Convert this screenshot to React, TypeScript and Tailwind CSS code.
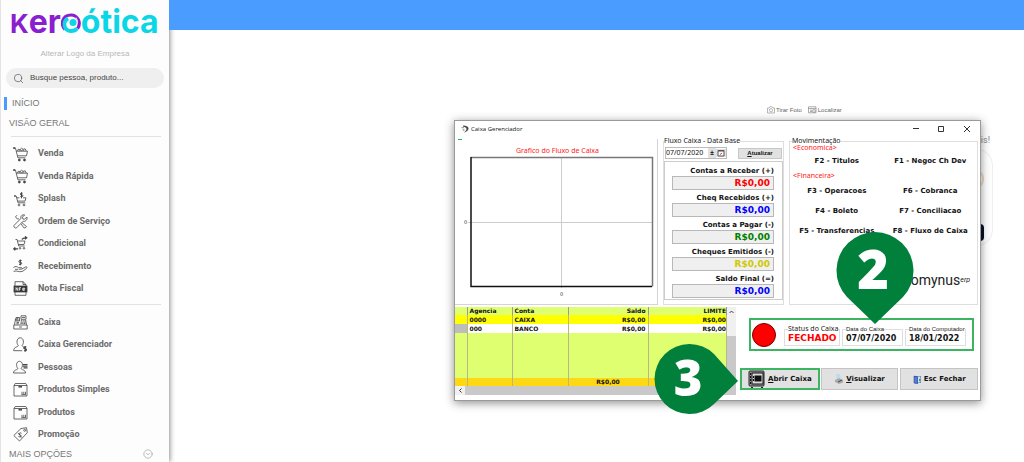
import type { ReactNode } from "react";
import { CircleChevronDown, Search } from "lucide-react";

type Item = { label: string; icon: ReactNode };

const cart = (
  <>
    <path d="M.5 1.200h2l2.400 9.600h7.600M3.300 4.200h11.200l-1 4.600H4.500" />
    <path d="M4.500 4l.8-1.800 1.700.5 1.600-1.500 1.500 1.200 2-.6 1.200 2.200M6 3.800l1-1 1.500.8 1.500-.8 1.200.9" />
    <path d="M.3 1h1.900" strokeWidth="1.600" />
    <circle cx="6.300" cy="13" r="1" fill="#444" />
    <circle cx="11.500" cy="13" r="1" fill="#444" />
  </>
);

const box = (
  <>
    <path d="M1 3.500h13V14H1zM1 3.500l1.200-2h10.600l1.200 2" />
    <path d="M5.500 4.800h3.500" strokeWidth="1.500" />
    <path d="M9 9.800v2.600M10.800 9.800v2.600M12.500 9.800v2.600M8.500 12.600h4.500" />
  </>
);

const SALES: Item[] = [
  { label: "Venda", icon: cart },
  { label: "Venda Rápida", icon: cart },
  {
    label: "Splash",
    icon: (
      <>
        <path d="M1.500 4h1.700l1.800 6.800h7.300M3.600 5.800h2.900M10 5.800h3l-1 3.300H4.600" />
        <path d="M9.600 1.200H8.200a.8.800 0 0 0 0 1.700h.8a.8.800 0 0 1 0 1.700H7.400M8.500.3v6" strokeWidth="1" />
        <path d="M1.200 4h1.400" strokeWidth="1.400" />
        <circle cx="6" cy="13" r=".9" />
        <circle cx="11" cy="13" r=".9" />
      </>
    ),
  },
  {
    label: "Ordem de Serviço",
    icon: (
      <>
        <path d="M13.800 3l-2.300 2.300-1.700-.4-.4-1.700L11.700.9C9.400.2 7.200 2 7.800 4.600L1.300 11.100c-1.300 1.500.9 3.800 2.500 2.500l6.400-6.400c2.500.7 4.500-1.700 3.600-4.200z" />
        <path d="M8.900 8.600l4.600 4-1.500 1.400-1.300-.3-2.500-3.800M6 4.800L4.300 5 2.500 2.900 4 1.200" />
      </>
    ),
  },
  {
    label: "Condicional",
    icon: (
      <>
        <path d="M2.500 3.500h1.600l1.600 6.500h6M4.500 5h7.500l-1 3.500H5.300" />
        <path d="M9 3.500c.5-1.500 2-1.700 4.500-1.700M12 .4l1.700 1.400L12 3.300M5 12.800H.9M2.300 11.400L.8 12.800l1.500 1.500" strokeWidth="1.300" />
        <circle cx="7" cy="12.300" r=".8" />
        <circle cx="11" cy="12.300" r=".8" />
      </>
    ),
  },
  {
    label: "Recebimento",
    icon: (
      <>
        <path d="M8.600 1.500H6.900a.9.900 0 0 0 0 1.900h.8a.9.900 0 0 1 0 1.900H6M7.300.5v5.900" strokeWidth="1" />
        <path d="M.5 8.500c2-1.500 3.500-1.200 5 .2h3c1 .1.900 1.400 0 1.500H5.800M9.300 9.800l3.500-1.900c1.200-.3 1.700.7.700 1.500l-3.700 2.800c-2.500 1-4.500.2-6.500-.2L.5 12.300" />
        <path d="M2 10.300h3" />
      </>
    ),
  },
  {
    label: "Nota Fiscal",
    icon: (
      <>
        <path d="M2 5V.7h8l3 2.800V5M2 11v3.300h11V11M10 .7v2.800h3" />
        <rect x="1" y="5" width="13" height="6" fill="#333" />
        <path d="M3 9.600V6.500l1.800 3V6.500M6.400 9.600V6.600h1.500M6.400 8h1.200M11.700 9.300h-1.900V7.200h1.900v1h-1.900" stroke="#fff" strokeWidth=".8" />
      </>
    ),
  },
];

const MANAGEMENT: Item[] = [
  {
    label: "Caixa",
    icon: (
      <>
        <path d="M.8 10h13.400v4H.8zM1.500 10l1-6h2M13.500 10l-.8-5M6 12h3" />
        <path d="M3 2.500h3.500V6H3zM8 .8h5v3.500H8zM9 2.500h3" />
        <path d="M7.800 5.800h4.500M7.600 7.200h5M7.500 8.600h5.400" strokeWidth="1" strokeDasharray="1.200 .6" />
        <path d="M3.500 7.500h2.500M3.300 8.800h2.500M4.800 2.500V6" />
      </>
    ),
  },
  {
    label: "Caixa Gerenciador",
    icon: (
      <>
        <path d="M5.300 8.300C3.300 6.800 3.300.8 7.200.8s3.900 6 1.900 7.500c0 1 .8 1.200 1.500 1.600M5.300 8.300c0 1.900-4.600 1.100-4.600 5.400h8.500" />
        <path d="M13.300 9.900h-1.600a.9.900 0 0 0 0 1.900h.8a.9.900 0 0 1 0 1.900H11M12.200 9v5.800" strokeWidth="1.100" />
      </>
    ),
  },
  {
    label: "Pessoas",
    icon: (
      <>
        <path d="M4.900 8.300C2.900 6.800 2.900 1.300 6.500 1.300s3.600 5.500 1.600 7c0 1.900 4.400 1.100 4.400 4.700H.5c0-3.600 4.400-2.800 4.400-4.700z" />
        <path d="M9.800 4.500h4.700M9.800 6.200h4.700M10.500 7.900h4" strokeWidth="1.200" />
      </>
    ),
  },
  { label: "Produtos Simples", icon: box },
  { label: "Produtos", icon: box },
  {
    label: "Promoção",
    icon: (
      <>
        <path d="M8 1.500l5.500-.8.800 5L6.500 14 .8 8.500z" />
        <circle cx="11.700" cy="3.300" r="1" />
        <path d="M8.500 6.300L6.800 5.800l-1 1.300 2.500 1.600-.9 1.400-2-.6M5.300 6l3.200 4.500" />
      </>
    ),
  },
];

const TOTALS = [
  { label: "Contas a Receber (+)", color: "text-[#ff0000]" },
  { label: "Cheq Recebidos (+)", color: "text-[#0000ff]" },
  { label: "Contas a Pagar (-)", color: "text-[#008000]" },
  { label: "Cheques Emitidos (-)", color: "text-[#d0c800]" },
  { label: "Saldo Final (=)", color: "text-[#0000ff]" },
];

function Menu({ items, className }: { items: Item[]; className: string }) {
  return (
    <ul className={`grid auto-rows-fr ${className}`}>
      {items.map((item) => (
        <li key={item.label} className="flex">
          <a href="#" className="flex items-center gap-[10px] pl-3 font-['Roboto'] text-[9px] font-bold text-[#6b6b6b]">
            <svg viewBox="0 0 15 15" className="size-[15px]" fill="none" stroke="#444" strokeWidth=".8">
              {item.icon}
            </svg>
            {item.label}
          </a>
        </li>
      ))}
    </ul>
  );
}

function Logo() {
  return (
    <a href="#" aria-label="Keroótica" className="flex h-[46px] items-baseline pl-[9px] pt-[2px] font-['Inter'] text-[32px] font-bold leading-10 text-[#8a1fd0]">
      <span className="text-[26px]">K</span>
      <span>er</span>
      <svg viewBox="0 0 20 20" className="size-[20px] shrink-0">
        <path d="M4 16.500C-1 11 1.500 2 10 2c7 0 10.500 8 6.500 13.500" fill="none" stroke="#8a1fd0" strokeWidth="3.200" />
        <path d="M7 5.500C1 9 3 18 10 18c3 0 5-1.200 6-2.500" fill="none" stroke="#0ad6e6" strokeWidth="3.800" />
        <path d="M15 4.500c2 3 1.500 6.500-1 9" fill="none" stroke="#fff" />
        <circle cx="12" cy="9.500" r="3.500" fill="#0ad6e6" />
      </svg>
      <span className="text-[#0ad6e6]">ótica</span>
    </a>
  );
}

function Sidebar() {
  return (
    <aside className="relative w-[169px] shrink-0 border-l border-[#e4e4e4] bg-[#fdfdfd] shadow-[1px_0_5px_rgba(0,0,0,0.45)]">
      <Logo />
      <a href="#" className="block text-center font-['Liberation_Sans'] text-[8px] leading-4 text-[#b8b8b8]">Alterar Logo da Empresa</a>
      <label className="mx-[5px] mt-[6px] flex h-[20px] items-center gap-[6px] rounded-full bg-[#efefef] pl-[7px]">
        <Search size={11} strokeWidth={1.500} color="#555" className="shrink-0" />
        <input
          type="text"
          aria-label="Buscar"
          placeholder="Busque pessoa, produto..."
          className="w-full bg-transparent font-['Liberation_Sans'] text-[8px] outline-none placeholder:text-[#444]"
        />
      </label>
      <nav className="font-['Liberation_Sans'] text-[9px] text-[#777]">
        <a href="#" className="ml-[3px] mt-[9px] block border-l-[3px] border-[#4a9aff] pl-[5px] leading-[13px]">INÍCIO</a>
        <h2 className="mt-[7px] pl-2 leading-[13px]">VISÃO GERAL</h2>
        <hr className="ml-[10px] mr-2 mt-[6px] border-[#e2e2e2]" />
        <Menu items={SALES} className="mt-[6px] h-[157px]" />
        <hr className="ml-[10px] mr-2 mt-1 border-[#e2e2e2]" />
        <Menu items={MANAGEMENT} className="mt-[6px] h-[135px]" />
        <button className="flex w-full items-center justify-between pl-2 pr-4 leading-4">
          MAIS OPÇÕES
          <CircleChevronDown size={10} strokeWidth={1.500} color="#999" />
        </button>
      </nav>
    </aside>
  );
}

type GroupProps = { title: string; className: string; narrow?: boolean; children: ReactNode };

function Group({ title, className, narrow, children }: GroupProps) {
  return (
    <fieldset className={`min-w-0 border border-[#dedede] ${className}`}>
      <legend
        className={`whitespace-nowrap font-normal leading-[8px] text-[#222] ${
          narrow ? "font-['Liberation_Sans'] text-[6px]" : "font-['Noto_Sans'] text-[7px]"
        }`}
      >
        {title}
      </legend>
      {children}
    </fieldset>
  );
}

function Chart() {
  return (
    <section className="w-[203px] shrink-0 border-b border-r border-[#d4d4d4] font-normal">
      <div className="ml-[3px] h-px w-1 bg-[#21b354]" />
      <h3 className="mt-[6px] pl-[3px] text-center font-['Noto_Sans'] text-[7px] leading-[10px] text-[#ff2020]">Grafico do Fluxo de Caixa</h3>
      <svg viewBox="0 0 202 146" className="block h-[146px] w-full">
        <path d="M106.500 2v130M13 66.500h184" stroke="#ccc" />
        <path d="M16 1.500h181.500v129" fill="none" stroke="#777" strokeWidth="1.500" />
        <path d="M16 1v129.500h181" fill="none" stroke="#111" strokeWidth="1.500" />
        <text x="9" y="68" fontSize="5" fill="#333">0</text>
        <text x="105" y="140" fontSize="5" fill="#333">0</text>
      </svg>
    </section>
  );
}

function CashFlow() {
  return (
    <Group title="Fluxo Caixa - Data Base" className="w-[121px] shrink-0">
      <div className="mt-[2px] flex items-center justify-between px-px">
        <div className="flex h-3 items-center border border-[#bbb] font-['Noto_Sans'] text-[7px] font-normal">
          <input aria-label="Data base" defaultValue="07/07/2020" className="w-[42px] outline-none" />
          <button aria-label="Alterar data" className="h-[10px] w-2 bg-[#e1e1e1] text-[7px] font-bold leading-[10px]">±</button>
          <button aria-label="Calendário" className="bg-[#e1e1e1] px-px">
            <svg viewBox="0 0 8 8" className="size-2" fill="#fff" stroke="#555">
              <path d="M1 1.500h6V7H1zM1 2h6" />
              <path d="M3 5.500l2-1.500" stroke="#e33" />
            </svg>
          </button>
        </div>
        <button className="h-[11px] w-11 border border-[#c8c8c8] bg-[#e1e1e1] text-center font-['Liberation_Sans'] text-[6px] font-bold leading-[9px]">
          <u>A</u>tualizar
        </button>
      </div>
      <div className="mt-[2px] border border-[#ccc] pb-px pl-[7px] pr-2 pt-px">
        {TOTALS.map((total) => (
          <label key={total.label} className="block pt-1 text-right leading-[9px]">
            {total.label}
            <output className={`block h-[14px] border border-[#b8b8b8] bg-[#efefef] pr-[3px] text-[9px] leading-3 ${total.color}`}>R$0,00</output>
          </label>
        ))}
      </div>
    </Group>
  );
}

function Movements() {
  return (
    <Group title="Movimentação" className="flex-1 *:[legend]:ml-[2px]">
      <div className="pl-[3px] font-['Noto_Sans'] font-normal leading-[6px] text-[#ff2020]">&lt;Economica&gt;</div>
      <div className="grid grid-cols-2 text-center leading-5">
        <button>F2 - Titulos</button>
        <button>F1 - Negoc Ch Dev</button>
      </div>
      <div className="pl-[3px] font-['Noto_Sans'] font-normal leading-[10px] text-[#ff2020]">&lt;Financeira&gt;</div>
      <div className="grid grid-cols-2 whitespace-nowrap text-center leading-5">
        <button>F3 - Operacoes</button>
        <button>F6 - Cobranca</button>
        <button>F4 - Boleto</button>
        <button>F7 - Conciliacao</button>
        <button>F5 - Transferencias</button>
        <button>F8 - Fluxo de Caixa</button>
      </div>
      <div className="mt-[29px] pr-[7px] text-right font-['Roboto'] text-[14px] font-normal leading-5 text-[#222]">
        omynus<sup className="text-[7px] italic">erp</sup>
      </div>
    </Group>
  );
}

function Accounts() {
  return (
    <div className="flex h-[88px] w-[281px] shrink-0 flex-col">
      <div className="flex flex-1">
        <table className="flex-1 table-fixed border-collapse bg-[#e0ff70] text-[6px] leading-[8px] [&_td]:border-r [&_td]:border-[#b5b98a] [&_th]:border-r [&_th]:border-[#999]">
          <colgroup>
            <col className="w-3" />
            <col className="w-[45px]" />
            <col className="w-[56px]" />
            <col className="w-[80px]" />
            <col />
          </colgroup>
          <thead>
            <tr>
              <th />
              <th className="pl-[2px] text-left">Agencia</th>
              <th className="pl-[2px] text-left">Conta</th>
              <th className="pr-[2px] text-right">Saldo</th>
              <th className="text-right">LIMITE</th>
            </tr>
          </thead>
          <tbody>
            <tr className="bg-[#ffff00]">
              <td />
              <td className="pl-[2px]">0000</td>
              <td className="pl-[2px]">CAIXA</td>
              <td className="pr-[2px] text-right">R$0,00</td>
              <td className="text-right">R$0,00</td>
            </tr>
            <tr className="bg-white">
              <td className="bg-[#bdbdbd]" />
              <td className="pl-[2px]">000</td>
              <td className="pl-[2px]">BANCO</td>
              <td className="pr-[2px] text-right">R$0,00</td>
              <td className="text-right">R$0,00</td>
            </tr>
            <tr className="h-[45px]">
              <td /><td /><td /><td /><td />
            </tr>
          </tbody>
          <tfoot>
            <tr className="bg-[#ffd814]">
              <td /><td /><td />
              <td className="text-center">R$0,00</td>
              <td />
            </tr>
          </tfoot>
        </table>
        <div className="flex w-[9px] flex-col items-center bg-[#f0f0f0]">
          <svg viewBox="0 0 9 9" className="size-[9px]" fill="none" stroke="#444">
            <path d="M2.500 6l2-2 2 2" />
          </svg>
          <div className="mt-5 w-full flex-1 bg-[#c9c9c9]" />
        </div>
      </div>
      <div className="flex h-[9px] bg-[#f0f0f0]">
        <svg viewBox="0 0 9 9" className="ml-px size-[9px]" fill="none" stroke="#333">
          <path d="M5.500 2.500l-2 2 2 2" />
        </svg>
        <div className="flex-1 bg-[#c9c9c9]" />
      </div>
    </div>
  );
}

function Status() {
  return (
    <div className="ml-[9px] mr-[6px] flex h-[33px] items-center border-2 border-[#3cb563] pl-px pt-px">
      <div className="mr-[8px] size-[24px] shrink-0 rounded-full border border-[#700] bg-[#ff0000]" />
      <div className="flex gap-[2px] pt-px">
        <Group title="Status do Caixa" className="w-[56px] pl-[3px]">
          <div className="pb-px text-[9px] leading-[11px] text-[#ff0000]">FECHADO</div>
        </Group>
        <Group title="Data do Caixa" narrow className="w-[61px] pl-[3px]">
          <div className="pb-px text-[8px] leading-[11px]">07/07/2020</div>
        </Group>
        <Group title="Data do Computador" narrow className="w-[61px] pl-[3px]">
          <div className="pb-px text-[8px] leading-[11px]">18/01/2022</div>
        </Group>
      </div>
    </div>
  );
}

function Actions() {
  return (
    <div className="flex h-[22px] gap-px pr-[2px] leading-[18px]">
      <button className="flex flex-1 items-center justify-center gap-[2px] border-2 border-[#3cb563] bg-[#e1e1e1]">
        <svg viewBox="0 0 18 18" className="size-[18px]">
          <rect x="1" y="1" width="15" height="15" rx="1" fill="#999" stroke="#222" />
          <rect x="4" y="3" width="11" height="11" fill="#ddd" stroke="#111" />
          <rect x="6.500" y="5.500" width="7" height="6" fill="#111" />
          <path d="M2.500 3v11M5.500 6v5" stroke="#111" strokeDasharray="2 1" />
          <path d="M3 17.500h2M13 17.500h2" stroke="#222" />
        </svg>
        <span><u>A</u>brir Caixa</span>
      </button>
      <button className="flex flex-1 items-center justify-center gap-[2px] border border-[#c4c4c4] bg-[#e1e1e1]">
        <svg viewBox="0 0 10 10" className="size-[10px]">
          <path d="M2 0h4l1 4-4 1z" fill="#b9dcf5" />
          <path d="M1 6l4-2 4 2v2.500L5 10 1 8z" fill="#aaa" />
          <path d="M4 8l4-2" stroke="#444" />
        </svg>
        <span><u>V</u>isualizar</span>
      </button>
      <button className="ml-px flex flex-1 items-center justify-center gap-[2px] border border-[#c4c4c4] bg-[#e1e1e1]">
        <svg viewBox="0 0 9 9" className="size-[9px]">
          <path d="M1 1h7v7H1z" fill="#4363c5" />
          <path d="M4.500 1.500h3v6h-3z" fill="#c9e6ff" />
          <path d="M1 1l3.500 1v7L1 8z" fill="#5a78d8" stroke="#263a8c" strokeWidth=".5" />
          <path d="M6 3.500l2.500 1.500L6 6.500z" fill="#4a9b40" />
        </svg>
        Esc Fechar
      </button>
    </div>
  );
}

function CashWindow() {
  return (
    <div className="absolute left-[454px] top-[120px] w-[527px] border border-[#9a9a9a] bg-white pb-[5px] font-['DejaVu_Sans'] text-[7px] font-bold text-[#111] shadow-[0_2px_9px_rgba(0,0,0,0.45)]">
      <header className="flex h-[16px] items-center pl-[6px] font-['Open_Sans'] font-normal">
        <svg viewBox="0 0 8 8" className="mr-[2px] size-2" fill="#444">
          <path d="M2 .5c7 .2 7.500 5 1 7.300L4.500 6C6.500 4 5.500 2.200 2 1.500z" />
          <path d="M.5 2.200h2.500v.8H.5zM1.200 3.800h2.300v.8H1.200zM2 5.300h1.500V6H2z" fill="#888" />
        </svg>
        <h1 className="flex-1 text-[6px]">Caixa Gerenciador</h1>
        <svg viewBox="0 0 72 16" className="h-4 w-[72px]" fill="none" stroke="#333">
          <path d="M5 7.500h6M30.500 5.500h5v5h-5zM56 5l6 6M62 5l-6 6" />
        </svg>
      </header>
      <div className="flex h-[168px] gap-[5px] pr-[2px]">
        <div className="flex pt-[2px]"><Chart /></div>
        <CashFlow />
        <Movements />
      </div>
      <div className="mt-[2px] flex">
        <Accounts />
        <div className="ml-[4px] flex flex-1 flex-col justify-between pb-[5px] pt-[11px]">
          <Status />
          <Actions />
        </div>
      </div>
    </div>
  );
}

export default function App() {
  return (
    <div className="relative flex h-screen overflow-hidden bg-white">
      <Sidebar />
      <main className="-z-0 flex-1">
        <div className="h-[30px] bg-[#4a9cff]" />
        <div className="ml-[598px] mt-[75px] flex items-center gap-[6px] font-['Liberation_Sans'] text-[6px] leading-[10px] text-[#666]">
          <a href="#" className="flex items-center gap-px">
            <svg viewBox="0 0 8 8" className="size-2" fill="none" stroke="#999" strokeWidth=".7">
              <path d="M.5 2h1.700l.7-1.200h2.300L6 2h1.500v5h-7z" />
              <circle cx="4" cy="4.300" r="1.600" />
            </svg>
            Tirar Foto
          </a>
          <a href="#" className="flex items-center gap-px">
            <svg viewBox="0 0 9 8" className="h-2 w-[9px]" fill="none" stroke="#888" strokeWidth=".7">
              <path d="M.5.8h7.500v6H.5zM.5 2.500H8M2 4.200h2.500M2 5.500h2" />
              <circle cx="6" cy="5" r="1.400" />
            </svg>
            Localizar
          </a>
        </div>
      </main>
      <div className="absolute left-[900px] top-[133px] w-[93px] text-right font-['Roboto'] text-[9px] text-[#888]">
        <p className="pr-[3px] leading-[14px]">Clientes especiais!</p>
        <div className="mt-[2px] flex h-[97px] flex-col items-end justify-between rounded-2xl border border-[#eee] pb-1 pr-2 pt-5">
          <div className="h-[18px] w-4 rounded-r-lg border-2 border-[#f3dcc0]" />
          <div className="h-[17px] w-14 rounded-sm bg-[#0a1226]" />
        </div>
      </div>
      <CashWindow />
      <svg viewBox="0 0 78 94" className="absolute left-[836px] top-[231px] h-[94px] w-[78px] font-['Open_Sans'] font-extrabold">
        <path d="M39 93L11 66A38.500 38.500 0 1 1 67 66z" fill="#00803a" />
        <text x="37" y="58" textAnchor="middle" fontSize="54" fill="#fff">2</text>
      </svg>
      <svg viewBox="0 0 86 72" className="absolute left-[654px] top-[342px] h-[72px] w-[86px] font-['Open_Sans'] font-extrabold">
        <path d="M84 39L60 62A35 35 0 1 1 60 12z" fill="#00803a" />
        <text x="34" y="54" textAnchor="middle" fontSize="49" fill="#fff">3</text>
      </svg>
    </div>
  );
}
